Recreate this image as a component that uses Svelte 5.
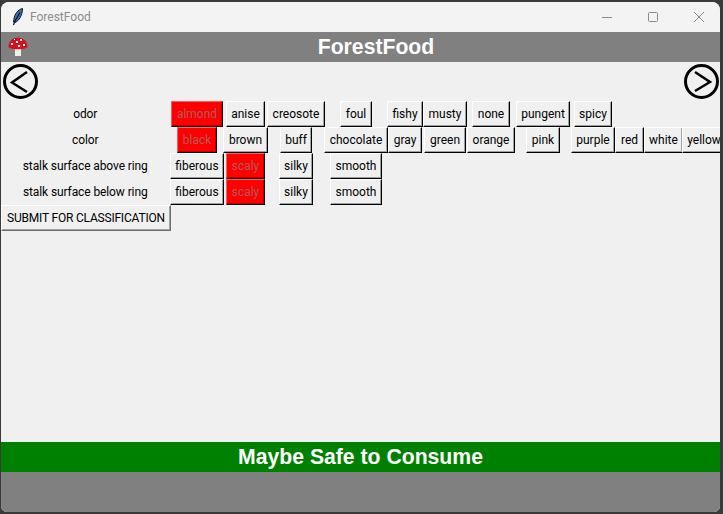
<script lang="ts">
  const rows = [
    {
      label: 'odor',
      options: [
        { col: 1, text: 'almond', on: true },
        { col: 2, text: 'anise' },
        { col: 3, text: 'creosote' },
        { col: 4, text: 'foul' },
        { col: 5, text: 'fishy' },
        { col: 6, text: 'musty' },
        { col: 7, text: 'none' },
        { col: 8, text: 'pungent' },
        { col: 9, text: 'spicy' }
      ]
    },
    {
      label: 'color',
      options: [
        { col: 1, text: 'black', on: true },
        { col: 2, text: 'brown' },
        { col: 3, text: 'buff' },
        { col: 4, text: 'chocolate' },
        { col: 5, text: 'gray' },
        { col: 6, text: 'green' },
        { col: 7, text: 'orange' },
        { col: 8, text: 'pink' },
        { col: 9, text: 'purple' },
        { col: 10, text: 'red' },
        { col: 11, text: 'white' },
        { col: 12, text: 'yellow' }
      ]
    },
    {
      label: 'stalk surface above ring',
      options: [
        { col: 1, text: 'fiberous' },
        { col: 2, text: 'scaly', on: true },
        { col: 3, text: 'silky' },
        { col: 4, text: 'smooth' }
      ]
    },
    {
      label: 'stalk surface below ring',
      options: [
        { col: 1, text: 'fiberous' },
        { col: 2, text: 'scaly', on: true },
        { col: 3, text: 'silky' },
        { col: 4, text: 'smooth' }
      ]
    }
  ];
</script>

<div class="window">
  <div class="titlebar">
    <svg class="feather" width="12" height="18" viewBox="0 0 12 18">
      <path d="M10.5 0.5C6 1.5 2.5 6 2 11l-.5 3 1.5.5C7 13 10.5 7 10.5.5z" fill="#3f6fb0" stroke="#10182a" stroke-width="1" />
      <path d="M8 4.5 3 13 1.5 17" fill="none" stroke="#0a0f1c" stroke-width="1.2" />
    </svg>
    <span class="title">ForestFood</span>
    <div class="controls">
      <svg width="12" height="12" viewBox="0 0 12 12"><path d="M1 6.5h10" stroke="#8a8a8a" fill="none" /></svg>
      <svg width="12" height="12" viewBox="0 0 12 12"><rect x="1.5" y="1.5" width="9" height="9" rx="1" stroke="#8a8a8a" fill="none" /></svg>
      <svg width="12" height="12" viewBox="0 0 12 12"><path d="M1 1l10 10M11 1 1 11" stroke="#8a8a8a" fill="none" /></svg>
    </div>
  </div>

  <header class="banner">
    <div class="logo">
      <svg width="20" height="20" viewBox="0 0 20 20">
        <path d="M7 11h6v8H7z" fill="#eeeeee" />
        <path d="M0.500 10C0.500 4 5 0.500 10 0.500s9.500 3.500 9.500 9.500c-1 3-18 3-19 0z" fill="#d8101c" />
        <g fill="#fff">
          <rect x="3" y="6" width="2" height="2" />
          <rect x="8" y="4" width="2" height="2" />
          <rect x="12" y="2" width="2" height="2" />
          <rect x="15" y="7" width="2" height="2" />
          <rect x="10" y="8" width="2" height="2" />
          <rect x="6" y="2" width="1" height="1" />
        </g>
      </svg>
    </div>
    <span class="banner-text">ForestFood</span>
  </header>

  <nav class="nav">
    <button class="arrow" aria-label="back">
      <svg width="37" height="37" viewBox="0 0 37 37">
        <circle cx="18.500" cy="18.500" r="16" fill="none" stroke="#000" stroke-width="3" />
        <path d="M25 9 10 19.500 25 29" fill="none" stroke="#000" stroke-width="2.500" />
      </svg>
    </button>
    <button class="arrow" aria-label="forward">
      <svg width="37" height="37" viewBox="0 0 37 37">
        <circle cx="18.500" cy="18.500" r="16" fill="none" stroke="#000" stroke-width="3" />
        <path d="M12 9 27 19 12 28" fill="none" stroke="#000" stroke-width="2.500" />
      </svg>
    </button>
  </nav>

  <div class="grid">
    {#each rows as row, r}
      <span class="label" style="grid-row: {r + 1}">{row.label}</span>
      {#each row.options as o}
        <button class="opt" class:on={o.on} style="grid-row: {r + 1}; grid-column: {o.col + 1}">{o.text}</button>
      {/each}
    {/each}
    <button class="opt submit">SUBMIT FOR CLASSIFICATION</button>
  </div>

  <div class="spacer"></div>
  <div class="result">Maybe Safe to Consume</div>
  <div class="footer"></div>
</div>

<style>
  :global(body) {
    margin: 0;
    background: #3a3a3a;
  }
  .window {
    display: flex;
    flex-direction: column;
    width: 719px;
    height: 510px;
    margin: 2px 3px 2px 1px;
    background: #f0f0f0;
    border-radius: 8px 8px 6px 6px;
    overflow: hidden;
    font-family: Roboto, 'Liberation Sans', sans-serif;
    font-size: 12px;
    color: #000;
  }
  .titlebar {
    display: flex;
    align-items: center;
    height: 30px;
    flex: none;
    background: #f3f3f3;
    padding-left: 11px;
  }
  .feather {
    margin-right: 6px;
  }
  .title {
    color: #8c8c8c;
    font-size: 12px;
  }
  .controls {
    display: flex;
    gap: 34px;
    margin-left: auto;
    margin-right: 15px;
  }
  .banner {
    display: flex;
    align-items: center;
    flex: none;
    height: 30px;
    background: #808080;
    color: #fff;
    font: bold 21.2px 'Liberation Sans', Arial, sans-serif;
  }
  .logo {
    flex: none;
    box-sizing: border-box;
    display: flex;
    width: 31px;
    padding-left: 7px;
  }
  .banner-text {
    flex: 1;
    text-align: center;
  }
  .nav {
    display: flex;
    justify-content: space-between;
    flex: none;
    height: 39px;
    padding: 1px 0 0 1px;
    box-sizing: border-box;
  }
  .arrow {
    padding: 0;
    border: 0;
    background: none;
    width: 37px;
    height: 37px;
  }
  .grid {
    display: grid;
    grid-template-columns: 168.5px 55px 42px 59px 61px 37px 43px 49px 55px 45px 28px 40px 41px;
    grid-auto-rows: 26px;
    flex: none;
    width: 725px;
  }
  .label {
    grid-column: 1;
    align-self: center;
    text-align: center;
    letter-spacing: -0.1px;
  }
  .opt {
    justify-self: center;
    box-sizing: border-box;
    height: 26px;
    padding: 0 4.5px;
    background: #f0f0f0;
    border: 1px solid;
    border-color: #fff #000 #000 #fff;
    box-shadow: inset -1px -1px 0 #a0a0a0;
    font: inherit;
    color: #000;
    white-space: nowrap;
  }
  .opt.on {
    background: #ff0000;
    border-color: #f86060 #000 #000 #f86060;
    box-shadow: inset -1px -1px 0 #c00000;
    color: #b05a5a;
  }
  .submit {
    grid-column: 1 / 3;
    grid-row: 5;
    justify-self: start;
    border-color: #fff #6e6e6e #6e6e6e #fff;
    padding: 0 5px;
    letter-spacing: -0.2px;
  }
  .spacer {
    flex: 1;
  }
  .result {
    flex: none;
    height: 30px;
    text-align: center;
    background: #008000;
    color: #fff;
    font: bold 21.2px/30px 'Liberation Sans', Arial, sans-serif;
  }
  .footer {
    flex: none;
    height: 40px;
    background: #808080;
  }
</style>
